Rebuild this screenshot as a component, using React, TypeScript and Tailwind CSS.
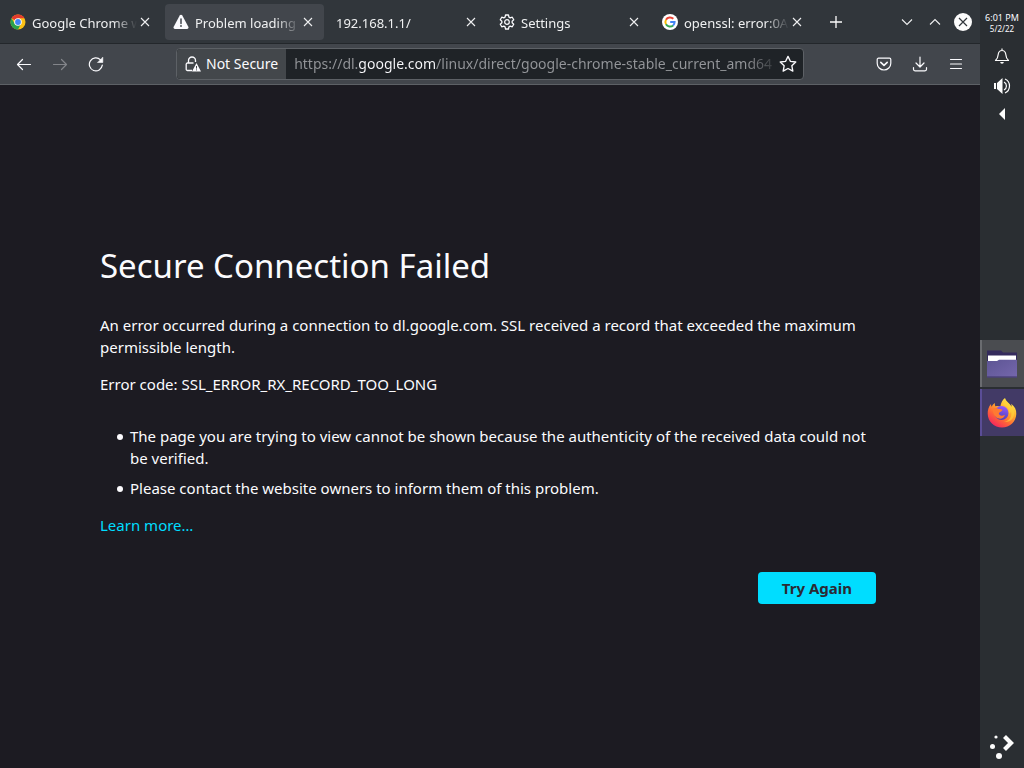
import { useState } from 'react';
import type { ReactNode } from 'react';
import clsx from 'clsx';

interface Tab {
  id: string;
  title: string;
  icon?: ReactNode;
}

const TABS: Tab[] = [
  { id: 'chrome', title: 'Google Chrome web', icon: <ChromeIcon /> },
  { id: 'problem', title: 'Problem loading page', icon: <WarningIcon /> },
  { id: 'router', title: '192.168.1.1/' },
  { id: 'settings', title: 'Settings', icon: <GearIcon /> },
  { id: 'openssl', title: 'openssl: error:0A00', icon: <GoogleIcon /> },
];

export default function App() {
  return (
    <div className="flex min-h-screen bg-[#1c1b22] font-['Noto_Sans',sans-serif] text-[#fbfbfe]">
      <div className="flex min-w-0 flex-1 flex-col">
        <TabBar />
        <Toolbar />
        <ErrorPage />
      </div>
      <Panel />
    </div>
  );
}

function TabBar() {
  const [active, setActive] = useState('problem');

  return (
    <header className="flex h-11 items-center border-b border-[#23272b] bg-[#31363b] pr-2 pl-0.5">
      <div className="flex min-w-0 gap-1">
        {TABS.map(tab => (
          <div
            key={tab.id}
            className={clsx('flex h-9 w-[159px] min-w-0 items-center rounded px-2', tab.id === active && 'bg-[#42464c]')}
          >
            <button onClick={() => setActive(tab.id)} className="flex min-w-0 flex-1 items-center gap-1.5 text-left">
              {tab.icon}
              <span className="min-w-0 flex-1 overflow-hidden pt-0.5 text-[13px] leading-5 whitespace-nowrap text-[#eff0f1] [mask-image:linear-gradient(to_left,transparent,black_24px)]">
                {tab.title}
              </span>
            </button>
            <button aria-label={`Close ${tab.title}`} className="flex size-4 items-center justify-center">
              <svg viewBox="0 0 16 16" className="size-4" fill="none" stroke="#eff0f1" strokeWidth="1.1">
                <path d="M4 4l8 8M12 4l-8 8" />
              </svg>
            </button>
          </div>
        ))}
      </div>
      <button aria-label="New tab" className="ml-[15px] flex size-4 items-center justify-center">
        <svg viewBox="0 0 16 16" className="size-4" fill="none" stroke="#fcfcfc" strokeWidth="1.3">
          <path d="M8 2v12M2 8h12" />
        </svg>
      </button>
      <div className="ml-auto flex items-center gap-2.5">
        <button aria-label="Minimize">
          <svg viewBox="0 0 18 18" className="size-[18px]" fill="none" stroke="#eff0f1" strokeWidth="1.1">
            <path d="M4 6.500l5 5 5-5" />
          </svg>
        </button>
        <button aria-label="Maximize">
          <svg viewBox="0 0 18 18" className="size-[18px]" fill="none" stroke="#eff0f1" strokeWidth="1.1">
            <path d="M4 11.500l5-5 5 5" />
          </svg>
        </button>
        <button aria-label="Close window">
          <svg viewBox="0 0 18 18" className="size-[18px]">
            <circle cx="9" cy="9" r="9" fill="#fcfcfc" />
            <path d="M5 5l8 8M13 5l-8 8" stroke="#31363b" strokeWidth="1.2" />
          </svg>
        </button>
      </div>
    </header>
  );
}

function ToolButton({ label, dim, children }: { label: string; dim?: boolean; children: ReactNode }) {
  return (
    <button aria-label={label} disabled={dim} className={clsx('flex h-8 w-9 items-center justify-center', dim && 'opacity-35')}>
      <svg viewBox="0 0 16 16" className="size-4" fill="none" stroke="#fbfbfe" strokeWidth="1.2" strokeLinecap="round" strokeLinejoin="round">
        {children}
      </svg>
    </button>
  );
}

function Toolbar() {
  const [url, setUrl] = useState('https://dl.google.com/linux/direct/google-chrome-stable_current_amd64.deb');

  return (
    <nav className="flex h-[41px] items-center border-b border-[#5d6166] bg-[#42464c] px-1.5">
      <ToolButton label="Back">
        <path d="M14.500 8.500h-13M6.500 3.500l-5 5 5 5" />
      </ToolButton>
      <ToolButton label="Forward" dim>
        <path d="M1.500 8.500h13M9.500 3.500l5 5-5 5" />
      </ToolButton>
      <ToolButton label="Reload">
        <path d="M14.300 9.200A6.500 6.500 0 1 1 12.500 3.800" />
        <path d="M14.800 1.500v5h-5z" fill="#fbfbfe" strokeWidth="0.6" />
      </ToolButton>

      <div className="mx-[62px] flex h-8 min-w-0 flex-1 items-center rounded border border-[#5d6166] bg-[#1f2327]">
        <button className="flex h-full shrink-0 items-center gap-[5px] rounded-l bg-[#43474b] px-2 text-sm">
          <InsecureLockIcon />
          Not Secure
        </button>
        <input
          aria-label="Address"
          value={url}
          onChange={e => setUrl(e.target.value)}
          spellCheck={false}
          className="ml-2 min-w-0 flex-1 bg-[linear-gradient(to_right,#94969a_64px,#fbfbfe_64px,#fbfbfe_142px,#94969a_142px,#94969a_452px,transparent_486px)] bg-clip-text text-sm text-transparent outline-none"
        />
        <button aria-label="Bookmark this page" className="mr-[5px] ml-1.5 flex size-5 shrink-0 items-center justify-center">
          <svg viewBox="0 0 16 16" className="size-[18px]" fill="none" stroke="#fbfbfe" strokeWidth="1.2" strokeLinejoin="round">
            <path d="M8 1.200l2.100 4.400 4.800.6-3.500 3.300.9 4.800L8 12l-4.300 2.300.9-4.800L1.100 6.200l4.800-.6z" />
          </svg>
        </button>
      </div>

      <ToolButton label="Save to Pocket">
        <path d="M2.500 2.200h11a1.300 1.300 0 0 1 1.300 1.300v3.700a6.800 6.800 0 0 1-13.600 0V3.500a1.300 1.300 0 0 1 1.300-1.300z" />
        <path d="M4.800 6.300L8 9.300l3.200-3" strokeWidth="1.600" />
      </ToolButton>
      <ToolButton label="Downloads">
        <path d="M8 1v9.500M4 7l4 4 4-4M1.500 11.500v1.800a1.500 1.500 0 0 0 1.500 1.500h10a1.500 1.500 0 0 0 1.500-1.500v-1.800" />
      </ToolButton>
      <ToolButton label="Menu">
        <path d="M2.500 3.500h11M2.500 8h11M2.500 12.500h11" />
      </ToolButton>
    </nav>
  );
}

function ErrorPage() {
  return (
    <main className="flex flex-1 flex-col items-center justify-center px-6">
      <div className="mb-1 w-full max-w-[780px] text-[15px] leading-[22px]">
        <h1 className="text-[33px] leading-[42px]">Secure Connection Failed</h1>
        <p className="mt-[27px]">
          An error occurred during a connection to dl.google.com. SSL received a record that exceeded the maximum permissible length.
        </p>
        <p className="mt-[15px]">Error code: SSL_ERROR_RX_RECORD_TOO_LONG</p>
        <ul className="mt-[30px] space-y-2 pl-[17px]">
          {[
            'The page you are trying to view cannot be shown because the authenticity of the received data could not be verified.',
            'Please contact the website owners to inform them of this problem.',
          ].map(reason => (
            <li key={reason} className="flex gap-[7px] before:mt-[9px] before:size-1.5 before:shrink-0 before:rounded-full before:bg-[#fbfbfe]">
              {reason}
            </li>
          ))}
        </ul>
        <p className="mt-[15px]">
          <a href="#learn-more" className="text-[#00ddff]">Learn more…</a>
        </p>
        <div className="mt-9 mr-1 flex justify-end">
          <button className="h-8 rounded bg-[#00ddff] px-6 font-bold text-[#2b2a33]">Try Again</button>
        </div>
      </div>
    </main>
  );
}

// Vertical desktop panel on the right edge
function Panel() {
  return (
    <aside className="grid w-11 shrink-0 grid-rows-[1fr_auto_1fr] bg-[#2a2e32]">
      <div className="flex flex-col items-center pt-3 text-center">
        <time className="text-[9px] leading-[11px] whitespace-nowrap">
          6:01 PM
          <span className="block text-[8px]">5/2/22</span>
        </time>
        <button aria-label="Notifications" className="mt-3.5">
          <svg viewBox="0 0 16 16" className="size-4" fill="none" stroke="#fcfcfc" strokeWidth="1.200" strokeLinejoin="round">
            <path d="M1.500 12.500h13c-2-1.800-2.500-3-2.700-6C11.500 4 10 2.500 8 2.500S4.500 4 4.200 6.500c-.2 3-.7 4.200-2.700 6zM8 2.500V.5" />
            <path d="M6.200 14h3.600a1.800 1.800 0 0 1-3.600 0z" fill="#fcfcfc" stroke="none" />
          </svg>
        </button>
        <button aria-label="Volume" className="mt-3">
          <svg viewBox="0 0 18 18" className="size-[18px]" fill="none" stroke="#fcfcfc" strokeWidth="1.200">
            <path d="M1 7h2v6H1zM4 7l5.500-5v16L4 13z" fill="#fcfcfc" stroke="none" />
            <path d="M11 6a4.500 4.500 0 0 1 0 8M12 3a7.700 7.700 0 0 1 0 14" />
          </svg>
        </button>
        <button aria-label="Show hidden icons" className="mt-3">
          <svg viewBox="0 0 16 16" className="size-4" fill="#fcfcfc">
            <path d="M11 2v12L5 8z" />
          </svg>
        </button>
      </div>

      <div className="flex flex-col gap-0.5 pt-2">
        <button aria-label="Files" className="flex h-[47px] items-center justify-center border-l-2 border-[#6a6c70] bg-[#4a4c50] pr-0.5">
          <FolderIcon />
        </button>
        <button aria-label="Firefox" className="flex h-[47px] items-center justify-center border-l-2 border-[#5a4d96] bg-[#423a66] pr-0.5">
          <FirefoxIcon />
        </button>
      </div>

      <button aria-label="Application launcher" className="flex items-end justify-center pb-2">
        <svg viewBox="0 0 28 28" className="size-7" fill="#fcfcfc">
          <circle cx="8" cy="5" r="1.600" />
          <circle cx="4.500" cy="14.500" r="2.500" />
          <circle cx="11" cy="24" r="3" />
          <path d="M16.500 4.500l6.500 6.500-6.500 6.500" fill="none" stroke="#fcfcfc" strokeWidth="4.200" />
        </svg>
      </button>
    </aside>
  );
}

function ChromeIcon() {
  return (
    <svg viewBox="0 0 16 16" className="size-4 shrink-0">
      <circle cx="8" cy="8" r="7.500" fill="#fbc116" />
      <path d="M8 8L1.500 4.250A7.500 7.500 0 0 1 14.500 4.250H8z" fill="#e33b2e" />
      <path d="M1.500 4.250A7.500 7.500 0 0 0 8 15.500L11 9.700 8 8 4.800 9.800z" fill="#2aa24c" />
      <circle cx="8" cy="8" r="3.800" fill="#fff" />
      <circle cx="8" cy="8" r="2.900" fill="#4285f4" />
    </svg>
  );
}

function WarningIcon() {
  return (
    <svg viewBox="0 0 16 16" className="size-4 shrink-0">
      <path d="M6.700 1.600a1.500 1.500 0 0 1 2.600 0l6 11.200A1.500 1.500 0 0 1 14 15H2a1.500 1.500 0 0 1-1.300-2.200z" fill="#fbfbfe" />
      <path d="M8 5v4.500" stroke="#42464c" strokeWidth="1.500" strokeLinecap="round" />
      <circle cx="8" cy="12" r="0.900" fill="#42464c" />
    </svg>
  );
}

function GearIcon() {
  return (
    <svg viewBox="0 0 24 24" className="size-4 shrink-0" fill="none" stroke="#fbfbfe" strokeWidth="1.900" strokeLinejoin="round">
      <path d="M9.800 1.500h4.400l.7 3.200 1.900 1.100 3.100-1 2.200 3.800-2.400 2.200v2.400l2.400 2.200-2.200 3.800-3.100-1-1.900 1.100-.7 3.200H9.800l-.7-3.200-1.900-1.100-3.100 1-2.200-3.800 2.400-2.200v-2.400L1.900 8.600l2.200-3.800 3.100 1 1.900-1.100z" />
      <circle cx="12" cy="12" r="3.500" />
    </svg>
  );
}

function GoogleIcon() {
  return (
    <svg viewBox="0 0 16 16" className="size-4 shrink-0" fill="none" strokeWidth="2">
      <circle cx="8" cy="8" r="8" fill="#fff" />
      <path d="M4 5.700A4.600 4.600 0 0 1 11.300 4.800" stroke="#ea4335" />
      <path d="M4 5.700a4.600 4.600 0 0 0 0 4.600" stroke="#fbbc05" />
      <path d="M4 10.300a4.600 4.600 0 0 0 7.100 1.100" stroke="#34a853" />
      <path d="M11.100 11.400A4.600 4.600 0 0 0 12.600 8H8.200" stroke="#4285f4" />
    </svg>
  );
}

function InsecureLockIcon() {
  return (
    <svg viewBox="0 0 16 16" className="size-4" fill="none" stroke="#fbfbfe" strokeWidth="1.300">
      <path d="M3.500 7V4.500a3.500 3.500 0 0 1 7 0V6M7 14.500H2.500a1.300 1.300 0 0 1-1.300-1.300V8.300A1.300 1.300 0 0 1 2.500 7h6" />
      <path d="M11.500 7l4.500 8.500H7z" fill="#fbfbfe" stroke="none" />
      <path d="M11.500 10v2.600M11.500 13.400v1" stroke="#43474b" strokeWidth="1" />
    </svg>
  );
}

function FolderIcon() {
  return (
    <svg viewBox="0 0 32 32" className="size-8">
      <defs>
        <linearGradient id="folder" x1="0" y1="0" x2="1" y2="1">
          <stop offset="0" stopColor="#5d5594" />
          <stop offset="1" stopColor="#7567ac" />
        </linearGradient>
      </defs>
      <path d="M1 2.500h14l2 2h14V16H1z" fill="#342b5c" />
      <path d="M2 7.500h28V16H2z" fill="#fff" />
      <path d="M1 13h10l2-1.300h18v17.800H1z" fill="url(#folder)" />
      <path d="M1 29h30" stroke="#3b3265" />
    </svg>
  );
}

function FirefoxIcon() {
  return (
    <svg viewBox="0 0 32 32" className="size-8">
      <defs>
        <linearGradient id="flame" x1="0.800" y1="0.050" x2="0.200" y2="0.950">
          <stop offset="0" stopColor="#fff44f" />
          <stop offset="0.350" stopColor="#ffb02e" />
          <stop offset="0.650" stopColor="#ff6a35" />
          <stop offset="1" stopColor="#f5235f" />
        </linearGradient>
        <linearGradient id="globe" x1="0.600" y1="0" x2="0.300" y2="1">
          <stop offset="0" stopColor="#9059ff" />
          <stop offset="1" stopColor="#4b3fb0" />
        </linearGradient>
      </defs>
      <path d="M19 1c1 3.500 5 5.500 6.500 9 .2-1.300 0-2.300-.4-3.200C28.800 9.500 30.500 13 30.300 17 30 24.800 23.800 30.500 16 30.500S1.800 24.500 1.700 16.800C1.600 13 2.700 9.500 5 7c0 1.200.2 2 .6 2.700C6.500 8 7.500 6.800 9 6c-.3 1.300-.1 2.400.4 3.300 2-.6 3.600-.4 5 .2C15 5.500 16.500 3 19 1z" fill="url(#flame)" />
      <circle cx="15.500" cy="16" r="7" fill="url(#globe)" />
      <path d="M7 11.500c2-.8 4.200-.7 5.500.5 1.800-.2 3.200.2 4 1-.7 1.700-2.800 1.700-3.700 3.200.2 2.500 3.200 3.200 6.200 1.500-.8 3.300-4 4.800-7 3.600C8.500 20 6.500 16 7 11.500z" fill="#ff7a32" />
      <path d="M17.500 8c4 1.200 6.300 4.500 5.500 8.600 1.200-.4 1.800-1.300 2-2.100 1.500 4.500-1.500 9.500-7 10.500 7 .5 11-4.500 10-10.500-.7-3.800-3.500-6.700-6.200-8.700-1.200-.9-2.200-2-2.600-3.500C17.700 4.200 17 6 17.500 8z" fill="#ffd23b" fillOpacity="0.650" />
    </svg>
  );
}
